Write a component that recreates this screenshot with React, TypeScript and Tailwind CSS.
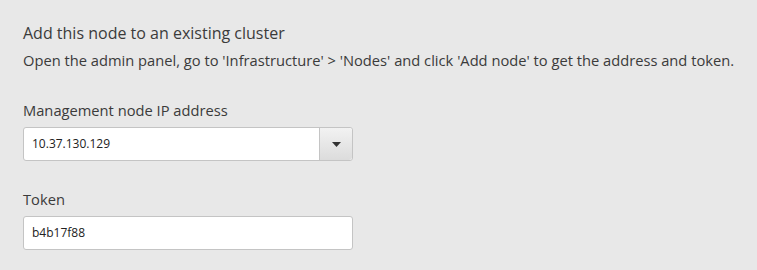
export default function App() {
  return (
    <div className="min-h-[270px] w-[757px] bg-[#e8e8e8] font-['Open_Sans',sans-serif] text-[#3b3b3b]">
      <div className="px-[23px] pt-[22px]">
        <h2 className="text-[16px] leading-[22px]">Add this node to an existing cluster</h2>
        <p className="mt-[6px] whitespace-nowrap text-[14.7px] leading-[20px]">
          Open the admin panel, go to 'Infrastructure' &gt; 'Nodes' and click 'Add node' to get the address and token.
        </p>

        {/* Management node */}
        <div className="mt-[30px]">
          <label className="block text-[14.7px] leading-[20px]">Management node IP address</label>
          <div className="mt-[7px] flex h-[34px] w-[330px] rounded-[3px] border border-[#c4c4c4] bg-white">
            <div className="flex flex-1 items-center px-[8px] text-[12px] text-[#222]">10.37.130.129</div>
            <div className="flex w-[33px] items-center justify-center border-l border-[#c4c4c4] bg-gradient-to-b from-[#f2f2f2] to-[#dcdcdc] rounded-r-[3px]">
              <svg width="9" height="5" viewBox="0 0 9 5">
                <path d="M0 0h9L4.5 5z" fill="#333" />
              </svg>
            </div>
          </div>
        </div>

        {/* Token */}
        <div className="mt-[28px]">
          <label className="block text-[14.7px] leading-[20px]">Token</label>
          <div className="mt-[7px] flex h-[34px] w-[330px] items-center rounded-[3px] border border-[#c4c4c4] bg-white px-[8px] text-[12px] text-[#222]">
            b4b17f88
          </div>
        </div>
      </div>
    </div>
  )
}
